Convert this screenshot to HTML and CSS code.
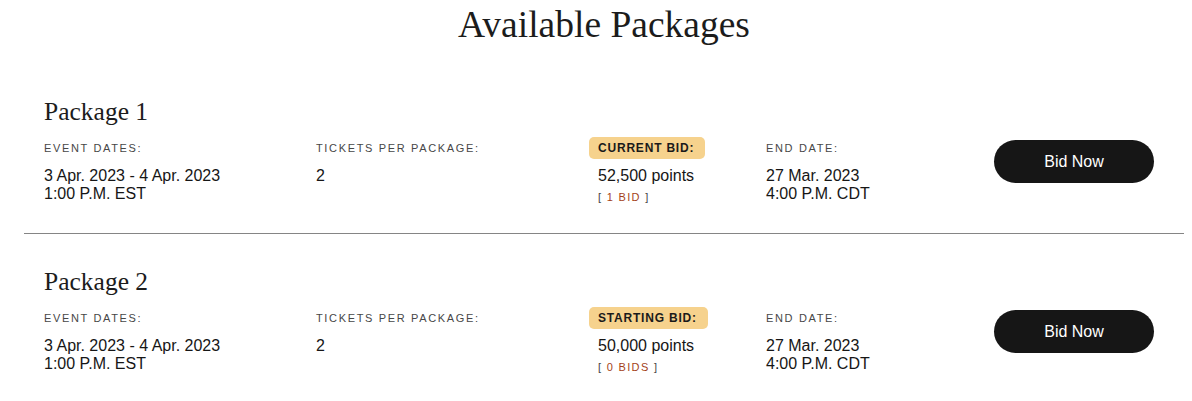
FILE: index.html
```html
<!DOCTYPE html>
<html lang="en">
<head>
<meta charset="utf-8">
<title>Available Packages</title>
<link rel="stylesheet" href="styles.css">
</head>
<body>
<h1 class="page-title">Available Packages</h1>
<div class="packages">
  <section class="package">
    <h2 class="package-name">Package 1</h2>
    <div class="package-grid">
      <div class="col">
        <div class="label">Event Dates:</div>
        <div class="value">3 Apr. 2023 - 4 Apr. 2023<br>1:00 P.M. EST</div>
      </div>
      <div class="col">
        <div class="label">Tickets per Package:</div>
        <div class="value">2</div>
      </div>
      <div class="col col-bid">
        <div class="label"><span class="badge">Current Bid:</span></div>
        <div class="value">52,500 points</div>
        <div class="bid-count">[ <span class="bids">1 Bid</span> ]</div>
      </div>
      <div class="col">
        <div class="label">End Date:</div>
        <div class="value">27 Mar. 2023<br>4:00 P.M. CDT</div>
      </div>
      <div class="col col-action">
        <button class="bid-btn" type="button">Bid Now</button>
      </div>
    </div>
  </section>
  <section class="package">
    <h2 class="package-name">Package 2</h2>
    <div class="package-grid">
      <div class="col">
        <div class="label">Event Dates:</div>
        <div class="value">3 Apr. 2023 - 4 Apr. 2023<br>1:00 P.M. EST</div>
      </div>
      <div class="col">
        <div class="label">Tickets per Package:</div>
        <div class="value">2</div>
      </div>
      <div class="col col-bid">
        <div class="label"><span class="badge">Starting Bid:</span></div>
        <div class="value">50,000 points</div>
        <div class="bid-count">[ <span class="bids">0 Bids</span> ]</div>
      </div>
      <div class="col">
        <div class="label">End Date:</div>
        <div class="value">27 Mar. 2023<br>4:00 P.M. CDT</div>
      </div>
      <div class="col col-action">
        <button class="bid-btn" type="button">Bid Now</button>
      </div>
    </div>
  </section>
</div>
</body>
</html>
```

FILE: styles.css
```css
html, body {
  margin: 0;
  padding: 0;
  background: #ffffff;
}

body {
  font-family: "Liberation Sans", Arial, sans-serif;
  color: #1a1a1a;
}

.page-title {
  margin: 3px 0 0;
  padding-left: 16px;
  font-family: "Liberation Serif", "Times New Roman", serif;
  font-weight: normal;
  font-size: 37.5px;
  line-height: 44px;
  text-align: center;
  color: #1c1c1c;
}

.packages {
  margin: 50px 8px 0 24px;
}

.package {
  padding: 0 30px 29px 20px;
}

.package + .package {
  border-top: 1px solid #858585;
  padding-top: 33px;
}

.package-name {
  margin: 0 0 10px;
  font-family: "Liberation Serif", "Times New Roman", serif;
  font-weight: normal;
  font-size: 25.5px;
  line-height: 30px;
  color: #1c1c1c;
}

.package-grid {
  display: grid;
  grid-template-columns: 272px 273px 177px 228px 160px;
}

.col {
  display: flex;
  flex-direction: column;
  align-items: flex-start;
}

.label {
  height: 22px;
  font-size: 11px;
  line-height: 22px;
  letter-spacing: 0.15em;
  text-transform: uppercase;
  color: #474747;
  margin-bottom: 8px;
}

.badge {
  display: inline-block;
  padding: 4px 11px 4px 9px;
  line-height: 14px;
  background: #f6d28d;
  border-radius: 5px;
  font-size: 12px;
  font-weight: bold;
  letter-spacing: 0.8px;
  color: #1a1a1a;
}

.col-bid .value,
.col-bid .bid-count {
  padding-left: 9px;
}

.value {
  font-size: 16px;
  line-height: 18px;
  color: #161616;
}

.bid-count {
  margin-top: 5px;
  font-size: 11px;
  line-height: 14px;
  letter-spacing: 0.12em;
  text-transform: uppercase;
  color: #444444;
}

.bids {
  color: #a33f19;
}

.col-action {
  align-items: stretch;
}

.bid-btn {
  margin-top: 3px;
  height: 43px;
  border: none;
  border-radius: 22px;
  background: #161616;
  color: #ffffff;
  font-family: "Liberation Sans", Arial, sans-serif;
  font-size: 16px;
  cursor: pointer;
}
```
